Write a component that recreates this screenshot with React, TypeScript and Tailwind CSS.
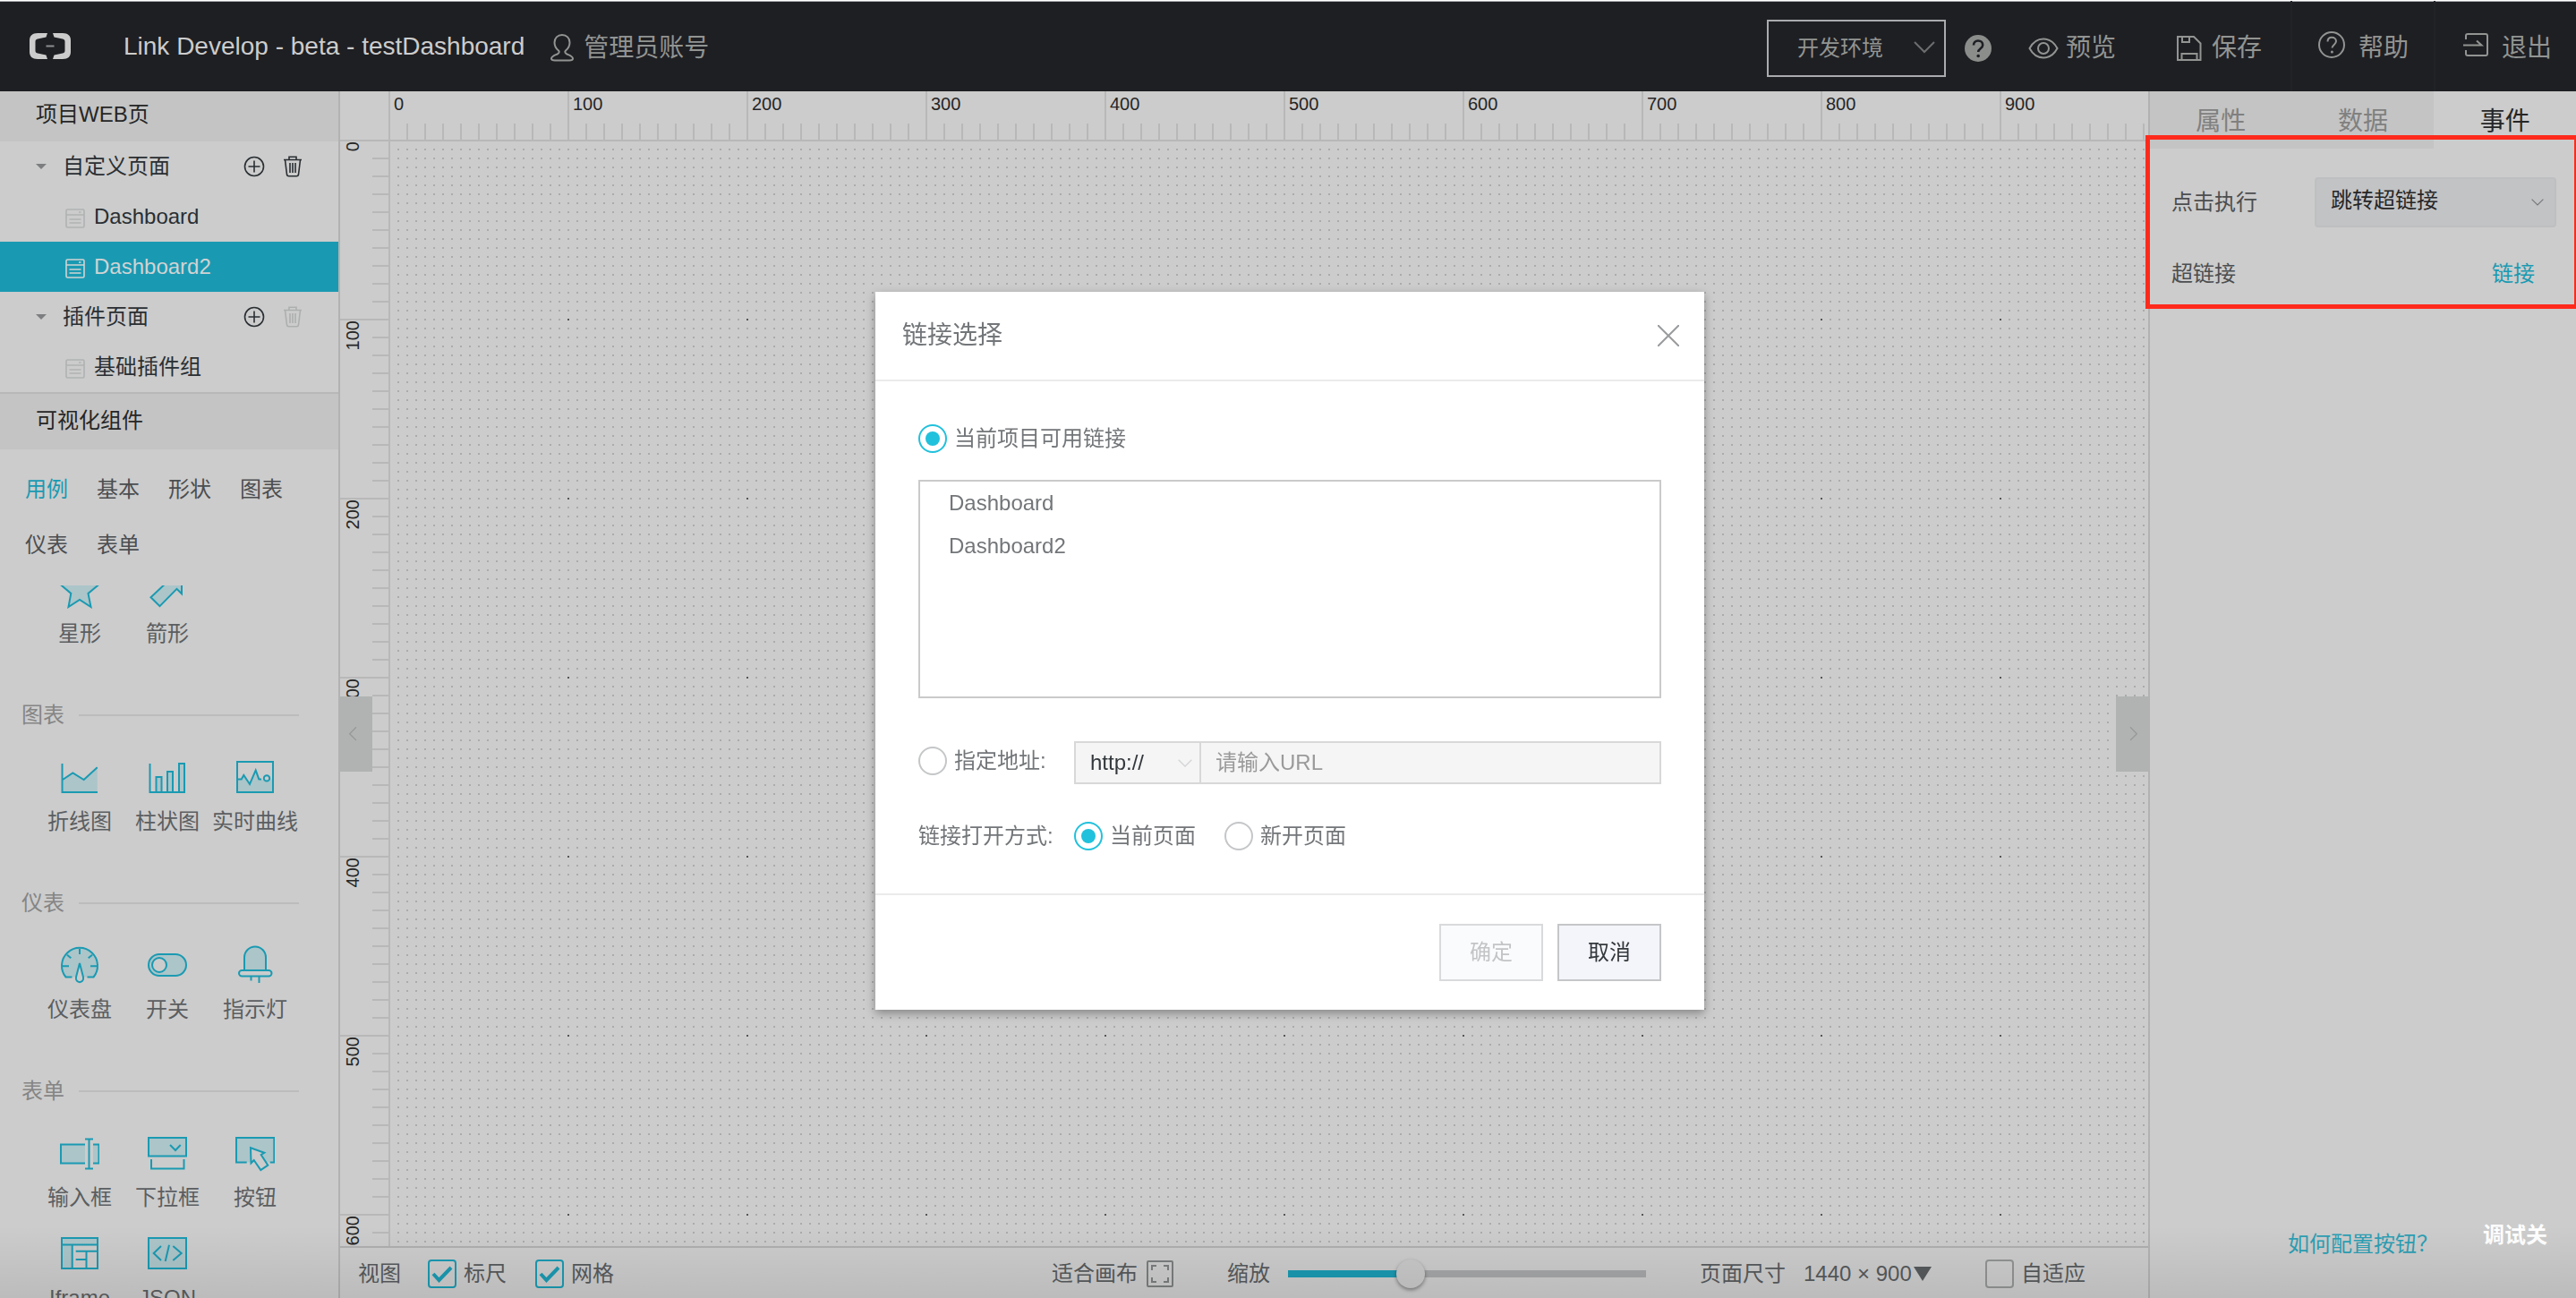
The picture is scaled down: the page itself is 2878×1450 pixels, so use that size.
import { ReactNode, useState } from "react";
import clsx from "clsx";

const categories = ["用例", "基本", "形状", "图表", "仪表", "表单"];
const columnMarks = [0, 100, 200, 300, 400, 500, 600, 700, 800, 900];
const rowMarks = [0, 100, 200, 300, 400, 500, 600];

const teal = "#1a9ab2";
const tealFill = "#abc5c9";

const icons: Record<string, ReactNode> = {
  star: (
    <path d="M22 1l7 14.5 15 1-12.5 10.5 3 15-12.5-8-12.5 8 2.800-15L0 16.500l15-1z" fill={tealFill} />
  ),
  arrow: <path d="M3.500 31.200l10 10 19-19.400 5.500 5.500V2H13l6 6 5 4z" fill={tealFill} />,
  line: (
    <>
      <path d="M3 25l11.300-7.500L26.700 25 41.700 11.300V39H3z" fill={tealFill} stroke="none" />
      <path d="M2.500 7v32H42M3 25l11.300-7.500L26.700 25l15-13.700" />
    </>
  ),
  bar: (
    <>
      <path d="M9.500 39V22h6v17M22 39V16h6v23M35 39V7h6v32" fill={tealFill} />
      <path d="M2.500 7v32H42" />
    </>
  ),
  realtime: (
    <>
      <path d="M2 24.400h5L9.300 20 16 30l6.700-15 3.600 9.400H42V39H2z" fill={tealFill} stroke="none" />
      <path d="M2 5h40v34H2zM2.700 24.400h4L9.300 20 16 30l6.700-15.600 3.600 10H29" />
      <circle cx="35" cy="23.400" r="3.200" fill="#cccccc" />
    </>
  ),
  gauge: (
    <>
      <path d="M6.500 35.500a20 20 0 1 1 31 0z" fill={tealFill} stroke="none" />
      <path d="M13.500 35.500h-7a20 20 0 1 1 31 0h-7M22 4v6M2 23.300h8M34 23.300h8M8 10.700l4.300 3.500M36 10.700l-4.300 3.500" />
      <path d="M22 20l-4 15.500c-1.500 7.500 9.500 7.500 8 0z" fill="#cccccc" />
    </>
  ),
  toggle: (
    <>
      <rect x="1" y="10" width="42" height="24" rx="12" fill={tealFill} />
      <circle cx="13" cy="22" r="8" fill="#cccccc" />
    </>
  ),
  lamp: (
    <>
      <path d="M10 28V13.500a12 12 0 0 1 24 0V28z" fill={tealFill} />
      <rect x="4" y="28" width="36.500" height="6.500" rx="3.200" fill="#cccccc" />
      <path d="M17.500 34.500v5M26.500 34.500V42" />
    </>
  ),
  input: (
    <>
      <path d="M28 12.500H1v21h27M37 12.500h6.500v21H37" fill={tealFill} />
      <path d="M28 6.500h9M28 39.500h9M32.500 6.500v33" />
    </>
  ),
  dropdown: (
    <>
      <path d="M1 5h42v20.500H1z" fill={tealFill} />
      <path d="M25 13l6 6 5.700-6M4 29v10.500h36.500V29" />
    </>
  ),
  button: (
    <>
      <path d="M12.700 32.500H1V5h42.300v27.500h-4.600" fill={tealFill} />
      <path d="M17 16.300l15.300 5.400-3.600 2.300 7.600 11.700-8 5.300L20.700 30l-3.200 3.300z" fill="#cccccc" />
    </>
  ),
  iframe: (
    <>
      <path d="M2 5h40v7.500H13.700V39H2z" fill={tealFill} stroke="none" />
      <path d="M2 5h40v34H2zM2 12.500h40M13.700 12.500V39M17.700 19.700H42M29.500 19.700V39M17.700 29h11.800" />
    </>
  ),
  json: (
    <>
      <path d="M1 5h42v34H1z" fill={tealFill} />
      <path d="M15 14l-8.300 8 8.300 8M28.300 14l9.400 8-9.400 8M24 12.700L19.700 31" />
    </>
  ),
};

const groups = [
  {
    name: "",
    items: [
      { label: "星形", icon: "star" },
      { label: "箭形", icon: "arrow" },
    ],
  },
  {
    name: "图表",
    items: [
      { label: "折线图", icon: "line" },
      { label: "柱状图", icon: "bar" },
      { label: "实时曲线", icon: "realtime" },
    ],
  },
  {
    name: "仪表",
    items: [
      { label: "仪表盘", icon: "gauge" },
      { label: "开关", icon: "toggle" },
      { label: "指示灯", icon: "lamp" },
    ],
  },
  {
    name: "表单",
    items: [
      { label: "输入框", icon: "input" },
      { label: "下拉框", icon: "dropdown" },
      { label: "按钮", icon: "button" },
      { label: "Iframe", icon: "iframe" },
      { label: "JSON", icon: "json" },
    ],
  },
];

function Chevron({ className }: { className: string }) {
  return (
    <svg className={className} viewBox="0 0 24 14" fill="none" stroke="currentColor" strokeWidth="2">
      <path d="M1 1l11 11L23 1" />
    </svg>
  );
}

function Header() {
  return (
    <header className="flex h-[102px] shrink-0 items-center border-t border-white bg-[#1e1f23] text-[28px] text-[#929492] shadow-[inset_0_1px_0_#a9abad]">
      <a href="#home" aria-label="Home" className="ml-8">
        <svg width="48" height="32" viewBox="0 0 48 32" fill="#cccccc">
          <path d="M21 1H10C4 1 1 4 1 9v13c0 5 3 8 9 8h11l-1.500-4.500-9.500-2c-2-.5-2.500-1.500-2.500-3v-10c0-1.500.5-2.500 2.500-3l9.500-2z" />
          <path d="M27 1h11c6 0 9 3 9 8v13c0 5-3 8-9 8H27l1.500-4.500 9.500-2c2-.5 2.500-1.500 2.500-3v-10c0-1.500-.5-2.500-2.500-3l-9.500-2z" />
          <path d="M19.500 14.500h9v2h-9z" fill="#8c8e8e" />
        </svg>
      </a>
      <h1 className="ml-[58px] text-[#cccccc]">Link Develop - beta - testDashboard</h1>
      <a href="#account" className="ml-7 flex items-center gap-2.5 pt-1">
        <svg width="28" height="32" viewBox="0 0 28 32" fill="none" stroke="currentColor" strokeWidth="2">
          <path d="M14 2c-5 0-8.500 3.500-8.500 8.500 0 4 2 7 4.500 9 1.500 1.500.5 3-1.500 4C5 25 2 26 2 28.500 2 30 4 30.500 6 30.500h16c2 0 4-.5 4-2 0-2.500-3-3.500-6.500-5-2-1-3-2.500-1.500-4 2.500-2 4.500-5 4.500-9C22.500 5.500 19 2 14 2z" />
        </svg>
        管理员账号
      </a>
      <div className="ml-auto flex h-full items-center">
        <div className="relative mt-1">
          <select
            aria-label="环境"
            className="h-16 w-[200px] appearance-none border-2 border-[#a9abad] bg-transparent pl-8 text-2xl"
          >
            <option>开发环境</option>
          </select>
          <Chevron className="pointer-events-none absolute top-6 right-3 w-6 text-[#6b6d6e]" />
        </div>
        <button aria-label="环境说明" className="mt-1 ml-5">
          <svg width="32" height="32" viewBox="0 0 32 32">
            <circle cx="16" cy="16" r="15" fill="#8b8d8b" />
            <path d="M11 12.500c0-3 2-5 5-5s5.200 2 5.200 4.700c0 4-5 4-5 7.800" fill="none" stroke="#1e1f23" strokeWidth="2.600" />
            <circle cx="16.200" cy="24.500" r="1.800" fill="#1e1f23" />
          </svg>
        </button>
        <button className="flex h-full w-[175px] items-center pt-1 pl-10">
          <svg className="mr-2" width="34" height="24" viewBox="0 0 34 24" fill="none" stroke="currentColor" strokeWidth="2">
            <path d="M1.500 12C5 5.500 10.500 1.500 17 1.500S29 5.500 32.500 12C29 18.500 23.500 22.500 17 22.500S5 18.500 1.500 12z" />
            <circle cx="17" cy="12" r="6" />
          </svg>
          预览
        </button>
        <button className="flex h-full w-[160px] items-center border-r-2 border-[#212326] pt-1 pl-[30px]">
          <svg className="mr-2.5" width="30" height="30" viewBox="0 0 30 30" fill="none" stroke="currentColor" strokeWidth="2">
            <path d="M2 2h18l7.500 7.500V28H2zM7 2v6h8V2M6.500 28v-7h17v7" />
          </svg>
          保存
        </button>
        <button className="flex h-full w-[160px] items-center border-r-2 border-[#212326] pt-1 pl-7">
          <svg className="mr-3.5 mb-2" width="32" height="32" viewBox="0 0 32 32" fill="none" stroke="currentColor" strokeWidth="2">
            <circle cx="16" cy="16" r="14" />
            <path d="M11.500 12.500c0-3 2-4.800 4.700-4.800s4.800 1.800 4.800 4.400c0 3.700-4.500 3.900-4.500 7.400" />
            <circle cx="16.400" cy="24" r="1.500" fill="currentColor" stroke="none" />
          </svg>
          帮助
        </button>
        <button className="flex h-full w-[157px] items-center pt-1 pl-[30px]">
          <svg className="mr-3.5 mb-2" width="30" height="28" viewBox="0 0 30 28" fill="none" stroke="currentColor" strokeWidth="2">
            <path d="M4 8V4q0-2 2-2h20q2 0 2 2v20q0 2-2 2H6q-2 0-2-2v-4M1 14.500h20.500l-5.500-5" />
          </svg>
          退出
        </button>
      </div>
    </header>
  );
}

function PageIcon() {
  return (
    <svg width="22" height="22" viewBox="0 0 22 22" fill="none" stroke="currentColor" strokeWidth="1.600">
      <rect x="1" y="1" width="20" height="20" rx="1.500" />
      <path d="M1 7h20M15 4h2.500M4.500 12h13M4.500 16h13" />
    </svg>
  );
}

function TreeFolder({ name, locked }: { name: string; locked?: boolean }) {
  return (
    <div className="flex h-14 items-center pl-10 pr-10">
      <svg width="12" height="6" viewBox="0 0 12 6" className="mr-[18px]" fill="#7c7e80">
        <path d="M0 0h12L6 6z" />
      </svg>
      {name}
      <button aria-label="新增" className="ml-auto mr-5">
        <svg width="24" height="24" viewBox="0 0 24 24" fill="none" stroke="currentColor" strokeWidth="1.600">
          <circle cx="12" cy="12" r="10.500" />
          <path d="M12 5.500v13M5.500 12h13" />
        </svg>
      </button>
      <button aria-label="删除" disabled={locked} className="disabled:text-[#adafaf]">
        <svg width="22" height="24" viewBox="0 0 22 24" fill="none" stroke="currentColor" strokeWidth="1.600">
          <path d="M1 4.500h20M7 4.500V1.200h8v3.300M2.500 4.500l2 16.500q.3 1.800 2 1.800h9q1.700 0 2-1.800l2-16.500M8 8v11M11 8v11M14 8v11" />
        </svg>
      </button>
    </div>
  );
}

function TreePage({ name, active }: { name: string; active?: boolean }) {
  return (
    <a href={`#${name}`} className={clsx("flex h-14 items-center gap-2.5 pl-[73px]", active && "bg-[#1a9ab2] text-[#d0d3d4]")}>
      <span className={clsx("mt-1", active ? "text-[#d0d3d4]" : "text-[#b0b2b2]")}>
        <PageIcon />
      </span>
      {name}
    </a>
  );
}

function Sidebar() {
  return (
    <aside className="flex w-[380px] shrink-0 flex-col border-r-2 border-[#b2b2b2] text-[#2a2f33]">
      <h2 className="flex h-14 shrink-0 items-center bg-[#c4c4c4] pb-1 pl-10 text-[#262626]">项目WEB页</h2>
      <nav>
        <TreeFolder name="自定义页面" />
        <TreePage name="Dashboard" />
        <TreePage name="Dashboard2" active />
        <TreeFolder name="插件页面" locked />
        <TreePage name="基础插件组" />
      </nav>
      <h2 className="flex h-16 shrink-0 items-center border-t-2 border-[#b8b8b8] bg-[#c4c4c4] pb-0.5 pl-10 text-[#262626]">
        可视化组件
      </h2>
      <div className="flex flex-wrap gap-x-8 px-7 py-3.5">
        {categories.map((category, i) => (
          <button key={category} className={clsx("h-[62px]", i === 0 ? "text-[#1a9ab2]" : "text-[#4c4e50]")}>
            {category}
          </button>
        ))}
      </div>
      <div className="min-h-0 flex-1 overflow-hidden text-[#5b5e61]">
        <div className="-mt-[26px]">
          {groups.map((group) => (
            <section key={group.name}>
              {group.name && (
                <h3 className="flex h-[98px] items-center gap-4 pt-5 pl-6 pr-11 text-[#858585]">
                  {group.name}
                  <span className="h-0.5 flex-1 bg-[#bcbcbc]" />
                </h3>
              )}
              <div className="grid grid-cols-[repeat(3,98px)] pl-10">
                {group.items.map((item) => (
                  <button key={item.label} className="flex flex-col items-center pt-2 pb-4 leading-8 whitespace-nowrap">
                    <svg className="mb-3" width="44" height="44" viewBox="0 0 44 44" fill="none" stroke={teal} strokeWidth="2">
                      {icons[item.icon]}
                    </svg>
                    {item.label}
                  </button>
                ))}
              </div>
            </section>
          ))}
        </div>
      </div>
    </aside>
  );
}

function Checkbox({ label, defaultChecked }: { label: string; defaultChecked?: boolean }) {
  return (
    <label className="flex items-center gap-2">
      <span className="grid">
        <input
          type="checkbox"
          defaultChecked={defaultChecked}
          className="peer col-start-1 row-start-1 size-8 appearance-none rounded border-2 border-[#929494] checked:border-[#1a9ab2]"
        />
        <svg
          className="pointer-events-none invisible col-start-1 row-start-1 size-8 peer-checked:visible"
          viewBox="0 0 32 32"
          fill="none"
          stroke={teal}
          strokeWidth="4"
        >
          <path d="M6 16l6.500 7L26 9" />
        </svg>
      </span>
      {label}
    </label>
  );
}

function StatusBar() {
  const [zoom, setZoom] = useState(33);
  return (
    <footer className="flex h-[58px] shrink-0 items-center border-t-2 border-[#afafaf] pt-0.5 pl-5 pr-[70px] text-[#575a5c]">
      <span className="mr-[30px]">视图</span>
      <Checkbox label="标尺" defaultChecked />
      <span className="w-8" />
      <Checkbox label="网格" defaultChecked />
      <button className="ml-auto flex items-center gap-2.5">
        适合画布
        <svg width="30" height="30" viewBox="0 0 30 30" fill="none" stroke="#7b7e7e" strokeWidth="2">
          <rect x="1" y="1" width="28" height="28" rx="1" />
          <path d="M6 11V6h5M19 6h5v5M24 19v5h-5M11 24H6v-5" />
        </svg>
      </button>
      <label htmlFor="zoom" className="ml-[60px]">
        缩放
      </label>
      <input
        id="zoom"
        type="range"
        value={zoom}
        onChange={(e) => setZoom(Number(e.target.value))}
        style={{ backgroundImage: `linear-gradient(to right, ${teal} ${zoom}%, #a5a6a8 ${zoom}%)` }}
        className="ml-5 h-2 w-[400px] appearance-none [&::-webkit-slider-thumb]:size-8 [&::-webkit-slider-thumb]:appearance-none [&::-webkit-slider-thumb]:rounded-full [&::-webkit-slider-thumb]:bg-[#c8c8c8] [&::-webkit-slider-thumb]:shadow-[0_2px_4px_rgba(0,0,0,0.4)]"
      />
      <label htmlFor="size" className="ml-[60px]">
        页面尺寸
      </label>
      <select id="size" className="ml-5 appearance-none">
        <option>1440 × 900</option>
      </select>
      <svg className="ml-0.5 mr-[60px]" width="20" height="16" viewBox="0 0 20 16" fill="currentColor">
        <path d="M0 0h20L10 16z" />
      </svg>
      <Checkbox label="自适应" />
    </footer>
  );
}

function Canvas() {
  return (
    <main className="relative flex min-w-0 flex-1 flex-col">
      <div className="flex h-[54px] shrink-0 overflow-hidden pl-[54px] text-xl leading-none text-[#262626]">
        {columnMarks.map((mark) => (
          <div
            key={mark}
            className="w-[200px] shrink-0 border-l-2 border-[#b8b8b8] bg-[linear-gradient(to_right,transparent_18px,#b8b8b8_18px)] bg-[length:20px_18px] bg-[position:0_100%] bg-repeat-x pt-1 pl-1"
          >
            {mark}
          </div>
        ))}
      </div>
      <div className="flex min-h-0 flex-1 overflow-hidden">
        <div className="w-14 shrink-0 border-r-2 border-[#b8b8b8] text-xl leading-none text-[#262626]">
          {rowMarks.map((mark) => (
            <div
              key={mark}
              className="h-[200px] border-t-2 border-[#b8b8b8] bg-[linear-gradient(to_bottom,transparent_18px,#b8b8b8_18px)] bg-[length:18px_20px] bg-[position:100%_0] bg-repeat-y pl-1"
            >
              <span className="block rotate-180 [writing-mode:vertical-rl]">{mark}</span>
            </div>
          ))}
        </div>
        <svg className="h-full flex-1 border-t-2 border-[#b8b8b8]">
          <defs>
            <pattern id="dots" width="10" height="10" patternUnits="userSpaceOnUse">
              <rect x="8" y="8" width="2" height="2" fill="#ababab" />
            </pattern>
            <pattern id="marks" width="200" height="200" patternUnits="userSpaceOnUse">
              <rect x="198" y="198" width="2" height="2" fill="#555555" />
            </pattern>
          </defs>
          <rect width="100%" height="100%" fill="url(#dots)" />
          <rect width="100%" height="100%" fill="url(#marks)" />
        </svg>
      </div>
      <button aria-label="收起左侧" className="absolute top-[676px] left-0 grid h-[84px] w-9 place-items-center bg-[#b0b3b2] pr-2 text-[#979999]">
        <Chevron className="w-4 rotate-90" />
      </button>
      <button aria-label="收起右侧" className="absolute top-[676px] right-0 grid h-[84px] w-9 place-items-center bg-[#b0b3b2] pl-1 text-[#979999]">
        <Chevron className="w-4 -rotate-90" />
      </button>
      <StatusBar />
    </main>
  );
}

function Inspector() {
  return (
    <aside className="relative flex w-[478px] shrink-0 flex-col border-l-2 border-[#b2b2b2] text-[#4c4e50]">
      <div className="grid h-16 grid-cols-3 text-[28px] text-[#808080]">
        <button className="bg-[#c4c4c4] pt-1">属性</button>
        <button className="bg-[#c4c4c4] pt-1">数据</button>
        <button className="pt-1 text-[#262626]">事件</button>
      </div>
      <div className="mt-8 flex items-center justify-between pl-6 pr-[22px]">
        <label htmlFor="action">点击执行</label>
        <div className="relative">
          <select
            id="action"
            className="h-14 w-[270px] appearance-none rounded border-2 border-[#bebfc0] bg-[#c2c3c5] pb-1 pl-4 text-[#262626]"
          >
            <option>跳转超链接</option>
          </select>
          <Chevron className="pointer-events-none absolute top-6 right-3.5 w-3.5 text-[#75777a]" />
        </div>
      </div>
      <div className="mt-8 flex items-center justify-between pl-6 pr-[46px] leading-10">
        超链接
        <button className="text-[#1a9ab2]">链接</button>
      </div>
      <div className="mt-auto flex items-start justify-end gap-[50px] pr-8 pb-11 leading-8">
        <a href="#guide" className="mt-2.5 text-[#2c9fb4]">
          如何配置按钮？
        </a>
        <button className="font-bold text-white">调试关</button>
      </div>
      <div className="pointer-events-none absolute top-[49px] -right-[3px] -left-[5px] h-[194px] border-[5px] border-[#ff2a1c]" />
    </aside>
  );
}

function Radio({ name, label, defaultChecked }: { name: string; label: string; defaultChecked?: boolean }) {
  return (
    <label className="flex items-center gap-2">
      <input
        type="radio"
        name={name}
        defaultChecked={defaultChecked}
        className="size-8 appearance-none rounded-full border-2 border-[#c4c6c8] bg-clip-content p-1.5 checked:border-[#20c1dc] checked:bg-[#20c1dc]"
      />
      {label}
    </label>
  );
}

function LinkDialog() {
  return (
    <div className="fixed inset-0 flex items-center justify-center pt-1 pl-1">
      <div role="dialog" aria-labelledby="dialog-title" className="w-[926px] bg-white text-[#737679] shadow-[0_4px_10px_rgba(0,0,0,0.35)]">
        <div className="flex h-[100px] items-center justify-between border-b-2 border-[#ebebeb] pr-7 pl-[30px]">
          <h2 id="dialog-title" className="text-[28px]">
            链接选择
          </h2>
          <button aria-label="关闭">
            <svg width="24" height="24" viewBox="0 0 24 24" stroke="#999b9d" strokeWidth="2">
              <path d="M0 0l24 24M24 0L0 24" />
            </svg>
          </button>
        </div>
        <div className="border-b-2 border-[#ebebeb] p-12 leading-8">
          <Radio name="source" label="当前项目可用链接" defaultChecked />
          <ul className="mt-[30px] h-[244px] border-2 border-[#cacaca] pl-8 leading-[48px]">
            <li>Dashboard</li>
            <li>Dashboard2</li>
          </ul>
          <div className="mt-12 flex h-12">
            <div className="flex w-[174px] items-center pb-1">
              <Radio name="source" label="指定地址:" />
            </div>
            <div className="relative">
              <select
                aria-label="协议"
                className="h-12 w-[142px] appearance-none border-2 border-[#d8d8d8] bg-[#f5f5f5] pl-4 text-[#33383c]"
              >
                <option>http://</option>
              </select>
              <Chevron className="pointer-events-none absolute top-5 right-2.5 w-4 text-[#d3d5d7]" />
            </div>
            <input
              aria-label="URL"
              placeholder="请输入URL"
              className="min-w-0 flex-1 border-2 border-l-0 border-[#d8d8d8] bg-[#f5f5f5] px-4 placeholder:text-[#9a9a9a]"
            />
          </div>
          <div className="mt-[42px] flex items-center">
            <span className="w-[174px]">链接打开方式:</span>
            <Radio name="target" label="当前页面" defaultChecked />
            <span className="w-8" />
            <Radio name="target" label="新开页面" />
          </div>
        </div>
        <div className="flex justify-end gap-4 px-12 py-8">
          <button disabled className="h-16 w-[116px] border-2 border-[#d9dadb] bg-[#fafbfc] text-[#c3c4c6]">
            确定
          </button>
          <button className="h-16 w-[116px] border-2 border-[#c4c6c8] bg-[#f4f5fa] text-[#33383c]">取消</button>
        </div>
      </div>
    </div>
  );
}

export default function App() {
  return (
    <div className="relative flex h-screen flex-col overflow-hidden bg-[#cccccc] font-['Liberation_Sans','Noto_Sans_CJK_SC',sans-serif] text-2xl">
      <Header />
      <div className="flex min-h-0 flex-1">
        <Sidebar />
        <Canvas />
        <Inspector />
      </div>
      <div className="pointer-events-none absolute inset-x-0 bottom-0 h-20 bg-linear-to-b from-transparent to-black/8" />
      <LinkDialog />
    </div>
  );
}
